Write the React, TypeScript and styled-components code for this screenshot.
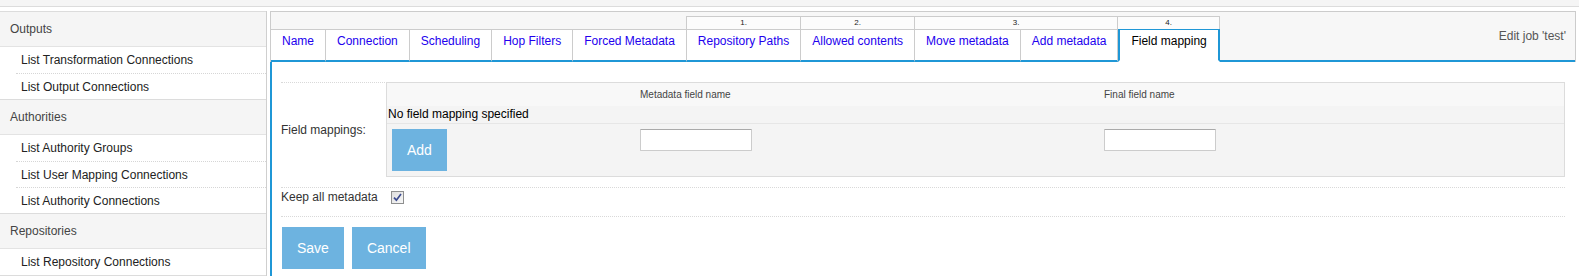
import styled, { createGlobalStyle } from 'styled-components'

const blue = '#1f97d6'

const GlobalStyle = createGlobalStyle`
  body {
    margin: 0;
    background: #fff;
    font-family: 'Liberation Sans', Arial, sans-serif;
    font-size: 12px;
    color: #333;
  }
`

const TopStrip = styled.div`
  height: 6px;
  background: #f5f5f5;
  border-bottom: 1px solid #dcdcdc;
`
const Layout = styled.div`
  display: flex;
  margin-top: 4px;
`
const Sidebar = styled.nav`
  width: 266px;
  flex-shrink: 0;
  border-right: 1px solid #cfcfcf;
`
const Section = styled.div`
  border-top: 1px solid #dcdcdc;
  &:last-child {
    border-bottom: 1px solid #dcdcdc;
  }
`
const SectionTitle = styled.div`
  height: 34px;
  line-height: 34px;
  padding-left: 10px;
  background: #f5f5f5;
  color: #444;
  border-bottom: 1px solid #e3e3e3;
`
const ItemList = styled.div`
  padding-left: 16px;
`
const Item = styled.div`
  box-sizing: border-box;
  height: 26px;
  display: flex;
  align-items: center;
  padding-left: 5px;
  color: #222;
  & + & {
    border-top: 1px dotted #d6d6d6;
  }
`

const Main = styled.main`
  flex: 1;
  margin: 0 3px;
  display: flex;
  flex-direction: column;
`
const Header = styled.div`
  display: flex;
  background: #f7f7f7;
  border: 1px solid #ccc;
  border-bottom: none;
`
const TabStrip = styled.div`
  display: flex;
  align-items: flex-end;
  padding-top: 4px;
`
const TabGroup = styled.div`
  display: flex;
  flex-direction: column;
`
const StepCell = styled.div`
  box-sizing: border-box;
  height: 13px;
  margin-left: -1px;
  border: 1px solid #ccc;
  border-bottom: none;
  background: #fcfcfc;
  font-size: 8px;
  line-height: 12px;
  text-align: center;
  color: #222;
`
const TabRow = styled.div`
  display: flex;
`
const Tab = styled.div<{ $active?: boolean }>`
  box-sizing: border-box;
  height: 33px;
  padding: 4px 11px 0;
  line-height: 14px;
  background: #fff;
  white-space: nowrap;
  border-top: 1px solid ${({ $active }) => ($active ? blue : '#ccc')};
  border-bottom: 2px solid ${({ $active }) => ($active ? '#fff' : blue)};
  border-right: ${({ $active }) => ($active ? `2px solid ${blue}` : '1px solid #ccc')};
  border-left: ${({ $active }) => ($active ? `2px solid ${blue}` : 'none')};
  color: ${({ $active }) => ($active ? '#000' : '#2200ee')};
`
const JobTitle = styled.div`
  flex: 1;
  display: flex;
  align-items: center;
  justify-content: flex-end;
  padding-right: 9px;
  color: #555;
  border-bottom: 2px solid ${blue};
`

const Content = styled.div`
  flex: 1;
  border-left: 2px solid ${blue};
  padding: 20px 11px 0 9px;
`
const FormRow = styled.div<{ $pad: string }>`
  display: flex;
  align-items: center;
  border-top: 1px dotted #d9d9d9;
  padding: ${({ $pad }) => $pad};
`
const Label = styled.div<{ $width?: number }>`
  width: ${({ $width }) => ($width ? `${$width}px` : 'auto')};
  margin-right: ${({ $width }) => ($width ? '0' : '13px')};
  color: #333;
`
const MapTable = styled.div`
  flex: 1;
  margin-top: -1px;
  border: 1px solid #dcdcdc;
  background: #f4f4f4;
  display: grid;
  grid-template-columns: 248px 464px 1fr;
`
const HeadCell = styled.div`
  height: 23px;
  display: flex;
  align-items: center;
  padding-left: 5px;
  background: #f8f8f8;
  font-size: 10px;
  color: #444;
`
const EmptyNote = styled.div`
  grid-column: 1 / -1;
  height: 17px;
  line-height: 17px;
  padding-left: 1px;
  color: #000;
  border-bottom: 1px solid #e6e6e6;
`
const BodyCell = styled.div`
  box-sizing: border-box;
  height: 52px;
  padding: 5px;
`
const TextInput = styled.input`
  box-sizing: border-box;
  width: 112px;
  height: 22px;
  border: 1px solid #ccc;
  border-top-color: #aaa;
  border-radius: 1px;
  background: #fff;
  display: block;
`
const Button = styled.button`
  height: 42px;
  padding: 0 15px;
  border: none;
  background: #6db3e0;
  color: #fff;
  font-family: 'Liberation Sans', Arial, sans-serif;
  font-size: 14px;
`
const ButtonBar = styled.div`
  display: flex;
  gap: 8px;
  padding-left: 1px;
`
const CheckBox = styled.span`
  box-sizing: border-box;
  width: 13px;
  height: 13px;
  border: 1px solid #8e8f8f;
  background: linear-gradient(135deg, #dedede, #f8f8f8);
  display: flex;
  align-items: center;
  justify-content: center;
`

const sections = [
  { title: 'Outputs', items: ['List Transformation Connections', 'List Output Connections'] },
  {
    title: 'Authorities',
    items: ['List Authority Groups', 'List User Mapping Connections', 'List Authority Connections'],
  },
  { title: 'Repositories', items: ['List Repository Connections'] },
]

const groups = [
  { step: '', tabs: ['Name', 'Connection', 'Scheduling', 'Hop Filters', 'Forced Metadata'] },
  { step: '1.', tabs: ['Repository Paths'] },
  { step: '2.', tabs: ['Allowed contents'] },
  { step: '3.', tabs: ['Move metadata', 'Add metadata'] },
  { step: '4.', tabs: ['Field mapping'] },
]

const App = () => {
  return (
    <>
      <GlobalStyle />
      <TopStrip />
      <Layout>
        <Sidebar>
          {sections.map((s) => (
            <Section key={s.title}>
              <SectionTitle>{s.title}</SectionTitle>
              <ItemList>
                {s.items.map((i) => (
                  <Item key={i}>{i}</Item>
                ))}
              </ItemList>
            </Section>
          ))}
        </Sidebar>
        <Main>
          <Header>
            <TabStrip>
              {groups.map((g) => (
                <TabGroup key={g.tabs[0]}>
                  {g.step && <StepCell>{g.step}</StepCell>}
                  <TabRow>
                    {g.tabs.map((t) => (
                      <Tab key={t} $active={t === 'Field mapping'}>
                        {t}
                      </Tab>
                    ))}
                  </TabRow>
                </TabGroup>
              ))}
            </TabStrip>
            <JobTitle>Edit job 'test'</JobTitle>
          </Header>
          <Content>
            <FormRow $pad="0 0 10px">
              <Label $width={105}>Field mappings:</Label>
              <MapTable>
                <HeadCell />
                <HeadCell>Metadata field name</HeadCell>
                <HeadCell>Final field name</HeadCell>
                <EmptyNote>No field mapping specified</EmptyNote>
                <BodyCell>
                  <Button>Add</Button>
                </BodyCell>
                <BodyCell>
                  <TextInput />
                </BodyCell>
                <BodyCell>
                  <TextInput />
                </BodyCell>
              </MapTable>
            </FormRow>
            <FormRow $pad="2px 0 12px">
              <Label>Keep all metadata</Label>
              <CheckBox>
                <svg width="9" height="9" viewBox="0 0 9 9">
                  <path d="M1 4.6 L3.4 7.2 L8 1" fill="none" stroke="#3c4b8f" strokeWidth="1.7" />
                </svg>
              </CheckBox>
            </FormRow>
            <FormRow $pad="10px 0 6px">
              <ButtonBar>
                <Button>Save</Button>
                <Button>Cancel</Button>
              </ButtonBar>
            </FormRow>
          </Content>
        </Main>
      </Layout>
    </>
  )
}

export default App
